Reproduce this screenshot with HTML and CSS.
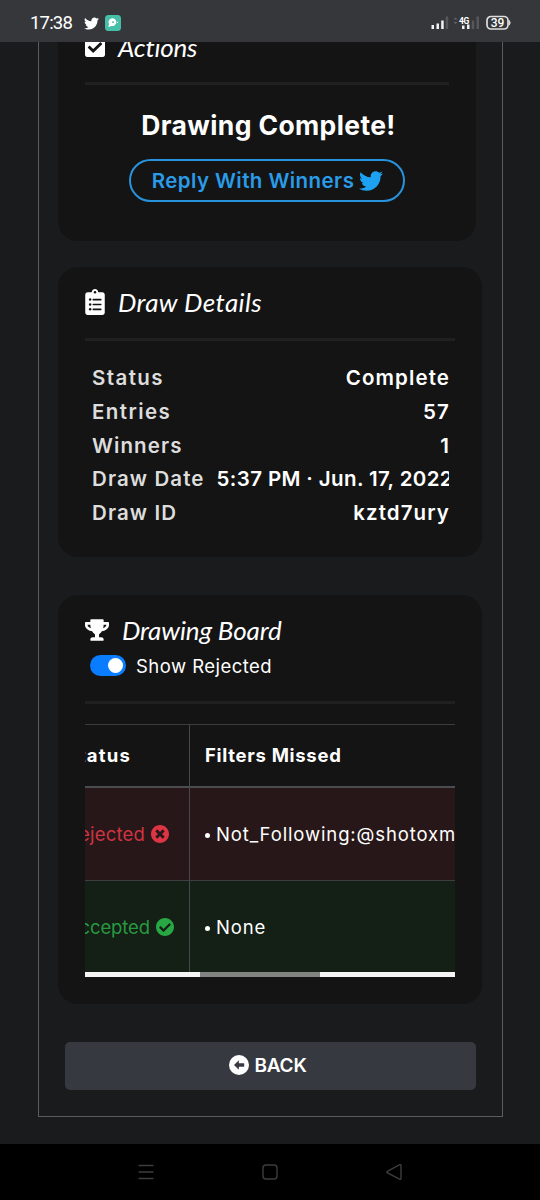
FILE: index.html
```html
<!DOCTYPE html>
<html lang="en">
<head>
<meta charset="utf-8">
<title>Draw Details</title>
<link rel="stylesheet" href="styles.css">
</head>
<body>
<svg width="0" height="0" class="defs">
  <symbol id="bird" viewBox="0 0 512 512"><path d="M459.37 151.716c.325 4.548.325 9.097.325 13.645 0 138.72-105.583 298.558-298.558 298.558-59.452 0-114.68-17.219-161.137-47.106 8.447.974 16.568 1.299 25.34 1.299 49.055 0 94.213-16.568 130.274-44.832-46.132-.975-84.792-31.188-98.112-72.772 6.498.974 12.995 1.624 19.818 1.624 9.421 0 18.843-1.3 27.614-3.573-48.081-9.747-84.143-51.98-84.143-102.985v-1.299c13.969 7.797 30.214 12.67 47.431 13.319-28.264-18.843-46.781-51.005-46.781-87.391 0-19.492 5.197-37.36 14.294-52.954 51.655 63.675 129.3 105.258 216.365 109.807-1.624-7.797-2.599-15.918-2.599-24.04 0-57.828 46.782-104.934 104.934-104.934 30.213 0 57.502 12.67 76.67 33.137 23.715-4.548 46.456-13.32 66.599-25.34-7.798 24.366-24.366 44.833-46.132 57.827 21.117-2.273 41.584-8.122 60.426-16.243-14.292 20.791-32.161 39.308-52.628 54.253z"/></symbol>
</svg>

<header class="statusbar">
  <span class="clock">17:38</span>
  <svg class="sb-bird" fill="#fff"><use href="#bird"/></svg>
  <svg class="sb-app" viewBox="0 0 16 16"><rect width="16" height="16" rx="3.5" fill="#46bfa9"/><path d="M3.200 11.800l.9-2.600a3.900 3.900 0 1 1 2.300 1.700l-2.300.9z" fill="#fff"/><circle cx="8" cy="7.200" r=".9" fill="#46bfa9"/><circle cx="12.400" cy="7.400" r=".7" fill="#fff"/></svg>
  <svg class="sb-right" viewBox="0 0 82 18">
    <g fill="#f1f1f2"><rect x="1.500" y="11" width="2.500" height="4"/><rect x="6.500" y="9.500" width="2.500" height="5.500"/><rect x="11.200" y="6.500" width="2.500" height="8.500"/></g>
    <rect x="15.700" y="2.500" width="2.500" height="12.500" fill="#56575b"/>
    <path d="M23.500 5.500l2-2 2 2zM23.500 8l2 2 2-2z" fill="#66676b"/>
    <g fill="#f1f1f2"><rect x="32" y="11.500" width="2.500" height="3.500"/><rect x="37" y="10.500" width="2.500" height="4.500"/></g>
    <g fill="#56575b"><rect x="41.700" y="6.500" width="2.500" height="8.500"/><rect x="46.500" y="2.500" width="2.500" height="12.500"/></g>
    <text x="29" y="9.500" class="sb-4g">4G</text>
    <rect x="57" y="2.500" width="21" height="12.500" rx="4" fill="none" stroke="#dedee0" stroke-width="1.700"/>
    <path d="M79.300 6.500q1.700 2.300 0 4.600z" fill="#dedee0" stroke="#dedee0"/>
    <text x="67.500" y="13.200" class="sb-batt">39</text>
  </svg>
</header>

<main class="page">
  <div class="frame">
    <section class="card actions">
      <h2 class="title"><svg class="ic-check" viewBox="0 32 448 448"><path fill="#fff" d="M400 480H48c-26.510 0-48-21.490-48-48V80c0-26.510 21.490-48 48-48h352c26.510 0 48 21.490 48 48v352c0 26.510-21.490 48-48 48zm-204.686-98.059l184-184c6.248-6.248 6.248-16.379 0-22.627l-22.627-22.627c-6.248-6.248-16.379-6.249-22.628 0L184 302.745l-70.059-70.059c-6.248-6.248-16.379-6.248-22.628 0l-22.627 22.627c-6.248 6.248-6.248 16.379 0 22.627l104 104c6.249 6.250 16.379 6.250 22.628.001z"/></svg><span class="hand h-actions">Actions</span></h2>
      <hr class="rule">
      <p class="complete">Drawing Complete!</p>
      <div class="reply"><span>Reply With Winners</span><svg class="reply-bird" fill="#1da1f2"><use href="#bird"/></svg></div>
    </section>

    <section class="card details">
      <h2 class="title"><svg class="ic-list" viewBox="0 0 384 512"><path fill="#fff" d="M336 64h-80c0-35.300-28.700-64-64-64s-64 28.700-64 64H48C21.500 64 0 85.500 0 112v352c0 26.500 21.500 48 48 48h288c26.500 0 48-21.500 48-48V112c0-26.500-21.500-48-48-48z"/><g fill="#141414"><circle cx="192" cy="64" r="24"/><circle cx="96" cy="208" r="24"/><circle cx="96" cy="304" r="24"/><circle cx="96" cy="400" r="24"/><rect x="144" y="192" width="176" height="32" rx="8"/><rect x="144" y="288" width="176" height="32" rx="8"/><rect x="144" y="384" width="176" height="32" rx="8"/></g></svg><span class="hand h-details">Draw Details</span></h2>
      <hr class="rule">
      <dl class="rows">
        <div class="row"><dt class="wide">Status</dt><dd>Complete</dd></div>
        <div class="row"><dt class="wide">Entries</dt><dd>57</dd></div>
        <div class="row"><dt>Winners</dt><dd>1</dd></div>
        <div class="row"><dt>Draw Date</dt><dd class="date">5:37 PM · Jun. 17, 2022</dd></div>
        <div class="row"><dt>Draw ID</dt><dd>kztd7ury</dd></div>
      </dl>
    </section>

    <section class="card board">
      <h2 class="title"><svg class="ic-cup" viewBox="0 0 576 512"><path fill="#fff" d="M552 64H448V24c0-13.300-10.700-24-24-24H152c-13.300 0-24 10.700-24 24v40H24C10.700 64 0 74.700 0 88v56c0 35.700 22.500 72.400 61.900 100.700 31.500 22.700 69.800 37.100 110 41.700C203.300 338.500 240 360 240 360v72h-48c-35.300 0-64 20.700-64 56v12c0 6.600 5.400 12 12 12h296c6.600 0 12-5.400 12-12v-12c0-35.300-28.700-56-64-56h-48v-72s36.700-21.500 68.100-73.600c40.300-4.600 78.600-19 110-41.700 39.300-28.300 61.900-65 61.900-100.700V88c0-13.300-10.700-24-24-24zM99.300 192.800C74.900 175.200 64 155.600 64 144v-16h64.200c1 32.600 5.800 61.200 12.800 86.200-15.100-5.200-29.200-12.400-41.700-21.400zM512 144c0 16.100-17.700 36.100-35.300 48.800-12.500 9-26.700 16.200-41.800 21.400 7-25 11.800-53.600 12.800-86.200H512v16z"/></svg><span class="hand h-board">Drawing Board</span></h2>
      <label class="switch"><span class="track"><span class="knob"></span></span><span>Show Rejected</span></label>
      <hr class="rule">
      <div class="table">
        <div class="tr th"><div class="td first">Status</div><div class="td">Filters Missed</div></div>
        <div class="tr bad"><div class="td first">Rejected<svg class="ic-round" viewBox="8 8 496 496"><path fill="#dc3545" d="M256 8C119 8 8 119 8 256s111 248 248 248 248-111 248-248S393 8 256 8zm121.600 313.100c4.700 4.700 4.700 12.300 0 17L338 377.600c-4.700 4.700-12.300 4.700-17 0L256 312l-65.100 65.600c-4.700 4.700-12.300 4.700-17 0L134.400 338c-4.700-4.700-4.700-12.300 0-17l65.600-65-65.600-65.100c-4.700-4.700-4.700-12.300 0-17l39.600-39.600c4.700-4.700 12.300-4.700 17 0l65 65.700 65.100-65.600c4.700-4.700 12.300-4.700 17 0l39.600 39.600c4.700 4.700 4.700 12.300 0 17L312 256l65.600 65.100z"/></svg></div><div class="td"><span class="dot"></span>Not_Following:@shotoxm</div></div>
        <div class="tr good"><div class="td first">Accepted<svg class="ic-round" viewBox="8 8 496 496"><path fill="#28a745" d="M504 256c0 136.967-111.033 248-248 248S8 392.967 8 256 119.033 8 256 8s248 111.033 248 248zM227.314 387.314l184-184c6.248-6.248 6.248-16.379 0-22.627l-22.627-22.627c-6.248-6.249-16.379-6.249-22.628 0L216 308.118l-70.059-70.059c-6.248-6.248-16.379-6.248-22.628 0l-22.627 22.627c-6.248 6.248-6.248 16.379 0 22.627l104 104c6.249 6.249 16.379 6.249 22.628.001z"/></svg></div><div class="td"><span class="dot"></span>None</div></div>
        <div class="scroll"><div class="thumb"></div></div>
      </div>
    </section>

    <div class="back"><svg class="ic-back" viewBox="8 8 496 496"><circle cx="256" cy="256" r="248" fill="#fff"/><path fill="#363940" d="M132 256l120-116v74h122q12 0 12 12v60q0 12-12 12H252v74z"/></svg><span>BACK</span></div>
  </div>
</main>

<nav class="navbar">
  <svg viewBox="0 0 16 16" class="nav-ic"><path d="M.5 1.500h15M.5 8h15M.5 14.500h15"/></svg>
  <svg viewBox="0 0 16 16" class="nav-ic"><rect x="1" y="1" width="14" height="14" rx="3"/></svg>
  <svg viewBox="0 0 16 16" class="nav-ic"><path d="M14 .5q1 0 1 1v13q0 1.200-1 .8L1.500 9Q.2 8.200 1.500 7.300z"/></svg>
</nav>
</body>
</html>
```
FILE: styles.css
```css
* { box-sizing: border-box; }
body {
  margin: 0;
  width: 540px;
  height: 1200px;
  overflow: hidden;
  display: flex;
  flex-direction: column;
  background: #1a1b1d;
  color: #fff;
  font-family: Inter, "Liberation Sans", sans-serif;
}
.defs { position: absolute; }
svg { display: block; flex: none; }
h2, p, dl, dd, dt { margin: 0; font-weight: inherit; }

.statusbar {
  flex: none;
  height: 42px;
  padding: 4px 28px 0 30px;
  display: flex;
  align-items: center;
  background: #36373b;
}
.clock { width: 54px; font: 400 18.5px Roboto, sans-serif; letter-spacing: -0.8px; white-space: nowrap; }
.sb-bird { width: 15px; height: 15px; }
.sb-app { width: 16px; height: 16px; margin-left: 6px; }
.sb-right { width: 82px; height: 18px; margin-left: auto; }
.sb-4g { font: 700 8.5px Roboto, sans-serif; fill: #fff; letter-spacing: -0.5px; }
.sb-batt { font: 500 12px Roboto, sans-serif; fill: #fff; text-anchor: middle; }

.page { flex: 1; min-height: 0; padding: 0 37px 27px 38px; overflow: hidden; }
.frame {
  height: 1075px;
  border: 1px solid #5b5c5e;
  border-top: 0;
  padding: 0 20px 0 19px;
}
.card {
  padding: 0 27px;
  background: #141414;
  border-radius: 20px;
}
.title { display: flex; align-items: center; height: 72px; }
.hand {
  font: italic 400 26px/36px Lato, sans-serif;
  white-space: nowrap;
}
.rule { height: 3px; margin: 0; border: 0; background: #202020; }

.actions { width: 418px; height: 199px; border-radius: 0 0 20px 20px; overflow: hidden; }
.actions .title { height: 40px; padding-bottom: 31px; }
.ic-check { width: 20px; height: 20px; margin-right: 13px; }
.h-actions { letter-spacing: -0.2px; }
.complete {
  margin-top: 20px;
  font-size: 26.5px;
  line-height: 40px;
  font-weight: 700;
  letter-spacing: 0.37px;
  text-align: center;
  padding-left: 3px;
}
.reply {
  width: 276px;
  height: 43px;
  margin: 14px auto 0;
  border: 2px solid #2793dc;
  border-radius: 22px;
  display: flex;
  align-items: center;
  justify-content: center;
  gap: 5px;
  padding-left: 1px;
  color: #2a9be8;
  font-size: 20.5px;
  font-weight: 600;
  letter-spacing: 0.43px;
  white-space: nowrap;
}
.reply-bird { width: 24px; height: 24px; }

.details { margin-top: 26px; height: 290px; }
.details .title { height: 71px; padding-bottom: 1px; }
.ic-list { width: 20px; height: 26px; margin-right: 13px; }
.h-details { letter-spacing: 0.4px; }
.rows {
  margin: 20px 6px 0 7px;
  font-size: 20.5px;
  line-height: 34px;
  font-weight: 600;
  letter-spacing: 1.1px;
}
.row { display: flex; height: 33.75px; overflow: hidden; }
.row dt { flex: none; margin-right: 12px; color: #ddd; }
.row .wide { letter-spacing: 1.4px; }
.row dd { margin-left: auto; margin-right: -1px; white-space: nowrap; }
.row .date { margin-left: 0; letter-spacing: 0.38px; }

.board { margin-top: 38px; height: 409px; }
.board .title { height: 56px; padding-top: 13px; }
.ic-cup { width: 24px; height: 22px; margin-right: 13px; }
.h-board { letter-spacing: -0.13px; }
.switch {
  display: flex;
  align-items: center;
  gap: 10px;
  height: 29px;
  margin-left: 5px;
  font-size: 18.5px;
  letter-spacing: 0.45px;
}
.track { width: 36px; height: 21px; padding: 3px; border-radius: 11px; background: #0a7cff; display: flex; justify-content: flex-end; }
.knob { width: 15px; height: 15px; border-radius: 50%; background: #fff; }
.board .rule { margin-top: 21px; }

.table { margin-top: 20px; border-top: 1px solid #3b3c3f; overflow: hidden; font-size: 18.5px; }
.tr { display: grid; grid-template-columns: 105px 265px; height: 92px; }
.td { display: flex; align-items: center; min-width: 0; overflow: hidden; padding-left: 15px; white-space: nowrap; letter-spacing: 0.87px; }
.td.first { justify-content: flex-end; padding: 0 20px 0 0; border-right: 1px solid #45484c; letter-spacing: 0.2px; }
.th { height: 63px; padding-bottom: 0; border-bottom: 2px solid #4b4c50; font-weight: 700; }
.th .td { padding-bottom: 2px; letter-spacing: 0.7px; }
.th .td.first { padding-right: 58px; padding-bottom: 2px; letter-spacing: 1.2px; }
.bad { height: 93px; background: #281718; border-bottom: 1px solid #3f3e40; }
.good { height: 91px; background: #141f15; }
.bad .first { color: #cf3442; }
.good .first { color: #279a41; padding-right: 15px; letter-spacing: -0.1px; }
.dot { flex: none; width: 5px; height: 5px; margin: 3px 6px 0 0; border-radius: 50%; background: #fff; }
.ic-round { width: 18px; height: 18px; margin-left: 6px; }
.scroll { height: 5px; background: #f4f4f4; }
.thumb { width: 120px; height: 5px; margin-left: 115px; background: #828482; }

.back {
  width: 411px;
  height: 48px;
  margin: 38px 0 0 7px;
  border-radius: 5px;
  background: #363940;
  display: flex;
  align-items: center;
  justify-content: center;
  gap: 5px;
  padding: 0 5px 2px 0;
  font-size: 19px;
  font-weight: 600;
  letter-spacing: -0.2px;
}
.ic-back { width: 20px; height: 20px; }

.navbar { flex: none; height: 56px; background: #000; display: flex; justify-content: center; align-items: center; gap: 108px; }
.nav-ic { width: 16px; height: 16px; fill: none; stroke: #3d3d3d; stroke-width: 1.4; }
```
